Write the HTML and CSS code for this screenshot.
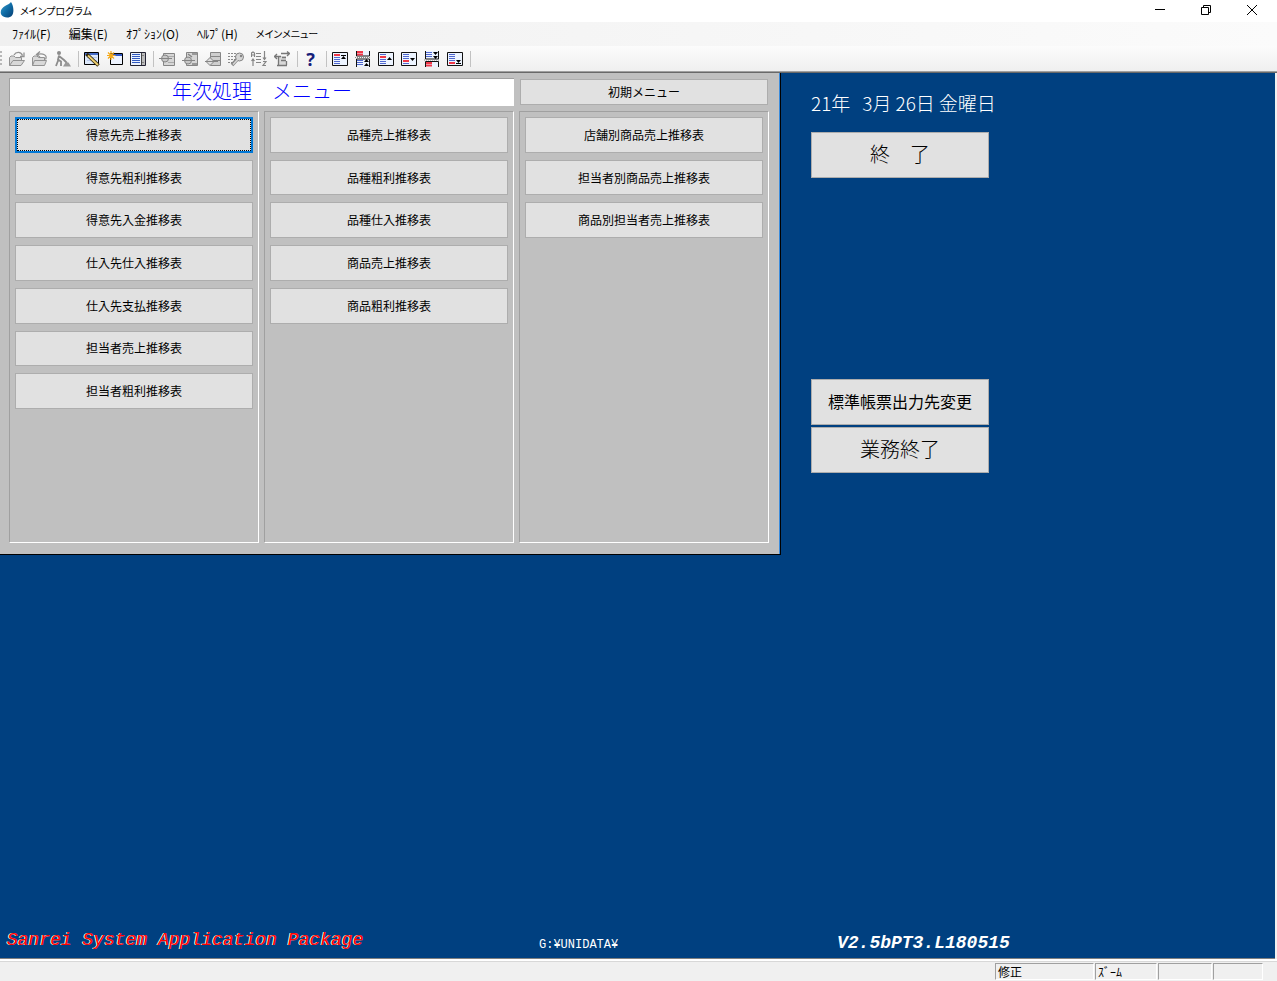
FILE: index.html
```html
<!DOCTYPE html>
<html lang="ja">
<head>
<meta charset="utf-8">
<title>メインプログラム</title>
<link rel="stylesheet" href="styles.css">
</head>
<body>
<header class="titlebar">
  <svg class="app-icon" viewBox="0 0 14 16"><defs><linearGradient id="drop" x1="0" y1="0" x2="1" y2="1"><stop offset="0" stop-color="#3fa0cc"/><stop offset=".5" stop-color="#0f6ca6"/><stop offset="1" stop-color="#063c70"/></linearGradient></defs><path d="M11 0C13.500 3.500 14.400 10 12 13.500C9.500 16.500 3.500 16 1.500 13C-.5 9.500 1.500 6 5 4C7.500 2.500 9.500 2 11 0Z" fill="url(#drop)"/></svg>
  <h1 class="app-title">メインプログラム</h1>
  <div class="window-controls">
    <button type="button" class="win-btn" aria-label="最小化"><svg viewBox="0 0 12 12"><path d="M1 5.500h10" stroke="#000" fill="none"/></svg></button>
    <button type="button" class="win-btn" aria-label="元に戻す"><svg viewBox="0 0 12 12"><path d="M1.500 3.500h7v7h-7zM3.500 3V1.500h7v7H9" stroke="#000" fill="none"/></svg></button>
    <button type="button" class="win-btn" aria-label="閉じる"><svg viewBox="0 0 12 12"><path d="M1 1l10 10M11 1L1 11" stroke="#000" fill="none"/></svg></button>
  </div>
</header>
<nav class="menubar">
  <button type="button" class="menu">ﾌｧｲﾙ(F)</button>
  <button type="button" class="menu">編集(E)</button>
  <button type="button" class="menu">ｵﾌﾟｼｮﾝ(O)</button>
  <button type="button" class="menu">ﾍﾙﾌﾟ(H)</button>
  <button type="button" class="menu menu-kana">メインメニュー</button>
</nav>
<div class="toolbar" role="toolbar">
  <span class="grip"></span>
  <button type="button" class="tool" aria-label="開く"><svg viewBox="0 0 16 16"><path d="M.5 14.500V6.500L2 5h3l1.500 1.500h6V9M.5 14.500L4 9.500h11.500l-3.500 5z" fill="#d8d8d8" stroke="#929292"/><path d="M5 4C7 .5 12 .5 13.500 4.500M15 1.500v4h-4" fill="none" stroke="#929292" stroke-width="1.300"/></svg></button>
  <button type="button" class="tool" aria-label="戻す"><svg viewBox="0 0 16 16"><path d="M.5 14.500V6.500L2 5h3l1.500 1.500h6v3M.5 14.500L2.500 9.500h12l-2 5z" fill="#d8d8d8" stroke="#929292"/><path d="M13.500 8.500C16 4 11 2 5 3.500M8 .5L4.500 3.500L8 6" fill="none" stroke="#929292" stroke-width="1.300"/></svg></button>
  <button type="button" class="tool" aria-label="作業"><svg viewBox="0 0 16 16"><circle cx="4" cy="2" r="2" fill="#8c8c8c"/><path d="M4 4.500L3 8.500l3 2v4.500M3.500 8.500L1 15M4 5l5 4 3 3" fill="none" stroke="#8c8c8c" stroke-width="1.800"/><path d="M8 15.500l2.500-4h3l2.500 4z" fill="#999"/></svg></button>
  <span class="sep"></span>
  <button type="button" class="tool" aria-label="編集"><svg viewBox="0 0 16 16"><path d="M.5 1.500h14v12H.5z" fill="#dce8fa" stroke="#000"/><path d="M1 3h13" stroke="#466cc8" stroke-width="2"/><path d="M3 6.500h10M3 9.500h10" stroke="#b8c8ec"/><path d="M2.500 3l12 11.500" stroke="#332a10" stroke-width="3.600"/><path d="M4 4.500L14 14" stroke="#f0d070" stroke-width="1.800"/></svg></button>
  <button type="button" class="tool" aria-label="新規"><svg viewBox="0 0 16 16"><path d="M3.500 2.500h12v11h-12z" fill="#eef4ff" stroke="#000"/><path d="M4 4h11" stroke="#345cc4" stroke-width="2"/><path d="M4 0v9M-.5 4.500h9M1 1.500l6 6M7 1.500l-6 6" stroke="#f6aa19" stroke-width="1.200"/></svg></button>
  <button type="button" class="tool" aria-label="一覧"><svg viewBox="0 0 16 16"><path d="M.5 1.500h15v13H.5z" fill="#eaf2ff" stroke="#223"/><path d="M2 3.500h8M2 5.500h8M2 7.500h8M2 9.500h8M2 11.500h8" stroke="#315ac0"/><path d="M11 2h4v12h-4z" fill="#bbb"/><path d="M11.500 2v12M13 4v1M13 11v1" stroke="#444"/></svg></button>
  <span class="sep"></span>
  <button type="button" class="tool" aria-label="挿入"><svg viewBox="0 0 16 16"><path d="M4.500 2.500h11v12h-11z" fill="#d6d6d6" stroke="#858585"/><path d="M9 5.500h6M9 11.500h6" stroke="#aaa"/><circle cx="6" cy="7.500" r="3.500" fill="#c8c8c8" stroke="#858585"/><path d="M0 7.500h13" stroke="#858585"/></svg></button>
  <button type="button" class="tool" aria-label="追加"><svg viewBox="0 0 16 16"><path d="M4.500 1.500h11v13h-11z" fill="#d6d6d6" stroke="#858585"/><path d="M6 3l4 3M10 3h5M10 13h5" stroke="#858585" stroke-width="1.500"/><circle cx="6" cy="9.500" r="3.500" fill="#c8c8c8" stroke="#858585"/><path d="M0 9.500h13" stroke="#858585"/></svg></button>
  <button type="button" class="tool" aria-label="下へ挿入"><svg viewBox="0 0 16 16"><path d="M5.500 1.500h10v13h-10zM6 5.500h9M6 9.500h9" fill="#cecece" stroke="#858585"/><path d="M1 10.500l4-4 4 4-4 4z" fill="#ddd" stroke="#858585"/><path d="M0 10.500h13" stroke="#858585"/></svg></button>
  <button type="button" class="tool" aria-label="キー"><svg viewBox="0 0 16 16"><path d="M0 2.500h12M0 5.500h8M0 8.500h7M0 11.500h5" stroke="#888" stroke-dasharray="2 1"/><path d="M9.500 8L4 14" stroke="#858585" stroke-width="3.500"/><circle cx="11.500" cy="6" r="4" fill="#d6d6d6" stroke="#858585"/><circle cx="13" cy="5" r="1.200" fill="#858585"/><path d="M10 8L5 13.500" stroke="#d6d6d6" stroke-width="1.500"/></svg></button>
  <button type="button" class="tool" aria-label="並べ替え"><svg viewBox="0 0 16 16"><path d="M.5 6V2l1.500-1L3.500 2v4M.5 4h3M2 15V8M.5 10L2 8l1.500 2M5 2.500h5M5 5.500h5M5 8.500h5M5 11.500h5M13.500 0v8M12 6.500l1.500 2 1.500-2M12 10.500h3L12 14.500h3" fill="none" stroke="#858585" stroke-width="1.200"/></svg></button>
  <button type="button" class="tool" aria-label="移動"><svg viewBox="0 0 16 16"><path d="M5 5h7v9H5z" fill="#d8d8d8"/><path d="M0 5.500h7M3 3L.5 5.500L3 8M4.500 6v8M3 14.500h10M12.500 14V10M7 2.500h8M13 .5L15.500 2.500L13 5M8 6.500h4M7 9.500h5" fill="none" stroke="#777" stroke-width="1.300"/></svg></button>
  <span class="sep"></span>
  <button type="button" class="tool tool-help" aria-label="ヘルプ">?</button>
  <span class="sep"></span>
  <button type="button" class="tool" aria-label="先頭"><svg viewBox="0 0 16 16"><use href="#frame"/><path d="M2 4h6" class="red"/><path d="M2 6.500h6M2 8.500h6M2 10.500h6M2 12.500h6" class="blue"/><path d="M9 4h5v1H9zM11.500 5l2.500 3H9z"/></svg></button>
  <button type="button" class="tool" aria-label="前ページ"><svg viewBox="0 0 16 16"><path d="M1.500 0v5h13V0M1.500 16V8h13v8" fill="#edf4ff" stroke="#111"/><path d="M2 1h6M2 3.500h6" class="red"/><path d="M0 6.500h16" stroke="#888" stroke-dasharray="1 1"/><path d="M2 9.500h6M2 11.500h6M2 13.500h6" class="blue"/><path d="M11.500 8l2.500 3H9zM11.500 12l2.500 3H9z"/></svg></button>
  <button type="button" class="tool" aria-label="前へ"><svg viewBox="0 0 16 16"><use href="#frame"/><path d="M2 3.500h6M2 8.500h6M2 10.500h6M2 12.500h6" class="blue"/><path d="M2 6h6" class="red"/><path d="M11.500 6l2.500 3H9z"/></svg></button>
  <button type="button" class="tool" aria-label="次へ"><svg viewBox="0 0 16 16"><use href="#frame"/><path d="M2 3.500h6M2 5.500h6M2 7.500h6M2 12.500h6" class="blue"/><path d="M2 10h6" class="red"/><path d="M11.500 10L14 7H9z"/></svg></button>
  <button type="button" class="tool" aria-label="次ページ"><svg viewBox="0 0 16 16"><path d="M1.500 0v8h13V0M1.500 16v-5.500h13V16" fill="#edf4ff" stroke="#111"/><path d="M2 1.500h6M2 3.500h6M2 5.500h6" class="blue"/><path d="M0 9h16" stroke="#888" stroke-dasharray="1 1"/><path d="M2 12h6M2 14.500h6" class="red"/><path d="M11.500 4L14 1H9zM11.500 8L14 5H9z"/></svg></button>
  <button type="button" class="tool" aria-label="末尾"><svg viewBox="0 0 16 16"><use href="#frame"/><path d="M2 3.500h6M2 5.500h6M2 7.500h6M2 9.500h6" class="blue"/><path d="M2 12h6" class="red"/><path d="M9 12h5v1H9zM11.500 12L14 9H9z"/></svg></button>
  <span class="sep"></span>
</div>
<svg class="defs" viewBox="0 0 16 16"><defs><path id="frame" d="M.5 1.500h15v13H.5z" fill="#edf4ff" stroke="#111"/></defs></svg>

<main class="desktop">
  <div class="workspace">
    <section class="panel">
      <div class="panel-head">
        <h2 class="panel-title">年次処理　メニュー</h2>
        <button type="button" class="btn">初期メニュー</button>
      </div>
      <div class="groups">
        <div class="group">
          <button type="button" class="btn btn-focus">得意先売上推移表</button>
          <button type="button" class="btn">得意先粗利推移表</button>
          <button type="button" class="btn">得意先入金推移表</button>
          <button type="button" class="btn">仕入先仕入推移表</button>
          <button type="button" class="btn">仕入先支払推移表</button>
          <button type="button" class="btn">担当者売上推移表</button>
          <button type="button" class="btn">担当者粗利推移表</button>
        </div>
        <div class="group">
          <button type="button" class="btn">品種売上推移表</button>
          <button type="button" class="btn">品種粗利推移表</button>
          <button type="button" class="btn">品種仕入推移表</button>
          <button type="button" class="btn">商品売上推移表</button>
          <button type="button" class="btn">商品粗利推移表</button>
        </div>
        <div class="group">
          <button type="button" class="btn">店舗別商品売上推移表</button>
          <button type="button" class="btn">担当者別商品売上推移表</button>
          <button type="button" class="btn">商品別担当者売上推移表</button>
        </div>
      </div>
    </section>
    <aside class="side">
      <p class="date"><span>21年</span><span>3月</span><span>26日</span><span>金曜日</span></p>
      <button type="button" class="btn btn-large">終　了</button>
      <div class="side-bottom">
        <button type="button" class="btn btn-medium">標準帳票出力先変更</button>
        <button type="button" class="btn btn-large">業務終了</button>
      </div>
    </aside>
  </div>
  <footer class="credits">
    <span class="product">Sanrei System Application Package</span>
    <span class="path">G:¥UNIDATA¥</span>
    <span class="version">V2.5bPT3.L180515</span>
  </footer>
</main>
<div class="statusbar">
  <span class="cell cell-mode">修正</span>
  <span class="cell cell-zoom">ｽﾞｰﾑ</span>
  <span class="cell cell-a"></span>
  <span class="cell cell-b"></span>
</div>
</body>
</html>
```
FILE: styles.css
```css
* { box-sizing: border-box; }
body {
  margin: 0;
  min-height: 100vh;
  display: flex;
  flex-direction: column;
  background: #f0f0f0;
  color: #000;
  font: 12px/16px "Noto Sans CJK JP", sans-serif;
}
button { font: inherit; color: inherit; border: 0; padding: 0; background: none; }
h1, h2, p { margin: 0; font-weight: 400; }
.defs { display: none; }

.titlebar { display: flex; align-items: center; height: 22px; background: #fff; }
.app-icon { width: 14px; height: 16px; margin-bottom: 2px; }
.app-title { margin-left: 6px; font-size: 10px; font-feature-settings: "palt"; }
.window-controls { display: flex; margin-left: auto; margin-right: 2px; margin-bottom: 2px; }
.win-btn { width: 46px; height: 18px; display: grid; place-items: center; }
.win-btn svg { width: 12px; height: 12px; }

.menubar {
  display: flex;
  align-items: center;
  gap: 18px;
  height: 24px;
  padding-left: 12px;
  background: linear-gradient(to right, #f0f0f0, #fbfbfb);
}
.menu { white-space: nowrap; }
.menu-kana { font-size: 10px; font-feature-settings: "palt"; }

.toolbar {
  display: flex;
  align-items: center;
  height: 27px;
  background: linear-gradient(#fcfcfc, #efefef);
  border-bottom: 1px solid #696969;
  box-shadow: inset 0 -1px #a0a0a0;
}
.grip { width: 2px; height: 16px; margin-right: 3px; background: repeating-linear-gradient(#b8b8b8 0 2px, transparent 2px 4px); }
.tool { width: 23px; height: 22px; display: grid; place-items: center; }
.tool svg { width: 16px; height: 16px; }
.tool-help { font: bold 18px/20px "Noto Sans", sans-serif; color: #16207a; }
.sep { width: 6px; height: 16px; background: linear-gradient(to right, transparent 4px, #c2c2c2 4px 5px, transparent 5px); }
.red { stroke: #f03848; stroke-width: 2; }
.blue { stroke: #5068d0; stroke-width: 1; }

.desktop {
  flex: 1;
  display: flex;
  flex-direction: column;
  margin-right: 2px;
  background: #004080;
  border-bottom: 1px solid #808080;
}
.workspace { display: grid; grid-template-columns: 781fr 494fr; align-items: start; }
.panel {
  padding: 5px 11px 11px 9px;
  background: #c0c0c0;
  border-right: 1px solid #000;
  border-bottom: 1px solid #000;
  box-shadow: inset -1px 0 #3c8cdc;
}
.panel-head, .groups { display: grid; grid-template-columns: repeat(3, 1fr); gap: 5px; }
.panel-title {
  grid-column: span 2;
  height: 28px;
  border-top: 1px solid #a0a0a0;
  border-left: 1px solid #a0a0a0;
  background: #fff;
  color: #0000ff;
  font-size: 20px;
  line-height: 24px;
  font-weight: 300;
  text-align: center;
}
.panel-head .btn { margin: 1px; }
.groups { margin-top: 5px; }
.group {
  display: grid;
  grid-template-rows: repeat(10, 1fr);
  gap: 7px;
  min-height: 432px;
  padding: 5px;
  border: 1px solid;
  border-color: #a0a0a0 #fff #fff #a0a0a0;
}
.btn { background: #e1e1e1; border: 1px solid #adadad; white-space: nowrap; }
.btn-focus { border: 2px solid #0078d7; outline: 1px dotted #000; outline-offset: -3px; }

.side { display: flex; flex-direction: column; align-items: flex-start; padding: 16px 0 0 30px; }
.date { display: flex; color: #fff; font-size: 19px; line-height: 28px; font-weight: 300; }
.date span + span { margin-left: 4px; }
.date span:nth-child(2) { margin-left: 12px; }
.side .btn { width: 178px; height: 46px; }
.side > .btn { margin-top: 15px; }
.side .btn { padding-bottom: 2px; }
.btn-large { font-size: 20px; font-weight: 300; }
.btn-medium { font-size: 16px; }
.side-bottom { display: flex; flex-direction: column; gap: 2px; margin-top: 201px; }

.credits {
  display: grid;
  grid-template-columns: 532fr 298fr 438fr;
  align-items: baseline;
  margin-top: auto;
  padding: 0 0 3px 7px;
  color: #fff;
  font-family: "Liberation Mono", monospace;
  white-space: nowrap;
}
.product { align-self: start; color: #f00; font-size: 18px; line-height: 24px; font-style: italic; text-shadow: -1px 0 #fff; }
.path, .version { padding-top: 3px; }
.version { font-size: 18px; line-height: 24px; font-weight: 700; font-style: italic; }

.statusbar {
  display: flex;
  justify-content: flex-end;
  gap: 1px;
  height: 22px;
  padding: 2px 14px 1px 0;
  border-top: 2px solid #fff;
  box-shadow: inset 0 1px #d8d8d8;
}
.cell { padding-left: 2px; border: 1px solid; border-color: #a0a0a0 #fff #fff #a0a0a0; }
.cell-mode { width: 99px; }
.cell-zoom { width: 62px; }
.cell-a { width: 54px; }
.cell-b { width: 50px; }
```
